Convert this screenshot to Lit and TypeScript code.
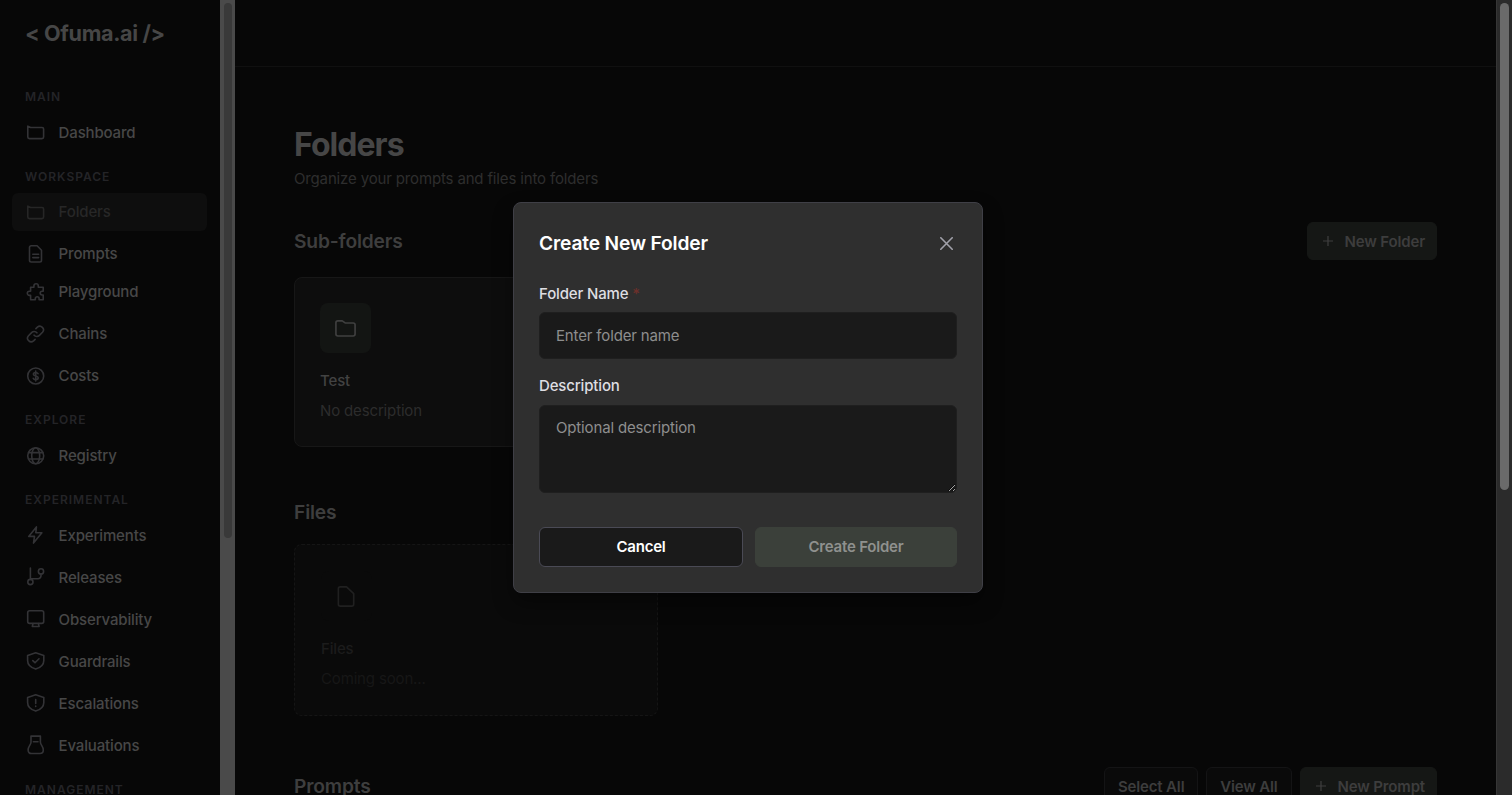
import { LitElement, html, css, svg } from "lit";
import { customElement } from "lit/decorators.js";

const icons: Record<string, unknown> = {
  folder: svg`<path d="M1.8 4.2V15a1.6 1.6 0 0 0 1.6 1.6H16A1.6 1.6 0 0 0 17.6 15V7.1A1.6 1.6 0 0 0 16 5.5H4.6Z"/>`,
  doc: svg`<path d="M5.2 1.8h5.9l4.4 4.4v10.1a1.7 1.7 0 0 1-1.7 1.7H5.2a1.7 1.7 0 0 1-1.7-1.7V3.5a1.7 1.7 0 0 1 1.7-1.7ZM6.8 10.2h5.8M6.8 13.6h5.8"/>`,
  puzzle: svg`<path d="M4.6 5.2h3.3V3.9a2.2 2.2 0 0 1 4.4 0v1.3h4.9v4h-1.1a1.9 1.9 0 0 0 0 3.8h1.1v4.8h-4.1v-1.2a1.9 1.9 0 0 0-3.8 0v1.2H4.6v-4.4H3.4a2.1 2.1 0 0 1 0-4.2h1.2Z"/>`,
  link: svg`<path d="M8.1 11.2a3.6 3.6 0 0 0 5.3.2l3.1-3.1a3.65 3.65 0 0 0-5.1-5.2L9.9 4.6M10.9 8.8a3.6 3.6 0 0 0-5.3-.2l-3.1 3.1a3.65 3.65 0 0 0 5.1 5.2l1.5-1.5"/>`,
  dollar: svg`<circle cx="9.7" cy="10" r="8"/><path d="M12 7.7c-.4-.8-1.3-1.2-2.3-1.2-1.3 0-2.3.6-2.3 1.7 0 2.4 4.8 1.1 4.8 3.6 0 1.1-1.1 1.8-2.5 1.8-1.2 0-2.2-.5-2.5-1.4M9.7 5.1v9.8"/>`,
  globe: svg`<circle cx="9.7" cy="9.8" r="8"/><ellipse cx="9.7" cy="9.8" rx="4" ry="8"/><path d="M2.6 6.6h14.2M2.6 13h14.2"/>`,
  bolt: svg`<path d="M10.4 1.9 2.7 11.4h5.8l-1 6.7 8.4-10.3H9.8Z"/>`,
  branch: svg`<circle cx="4.4" cy="15" r="2.6"/><circle cx="15" cy="4.4" r="2.6"/><path d="M4.4 1v11.4M15 7v1.7a3 3 0 0 1-3 3H4.6"/>`,
  monitor: svg`<rect x="1.7" y="1.8" width="16" height="12.6" rx="1.9"/><path d="M7 14.6l-.7 2.9h6.8l-.7-2.9"/>`,
  shieldCheck: svg`<path d="M9.7 1.8 17.8 4.5v5c0 4.2-3.2 7.1-8.1 8.6-4.9-1.5-8.1-4.4-8.1-8.6v-5ZM6.8 9.6l2.2 2.2 4-4"/>`,
  shieldAlert: svg`<path d="M9.7 1.8 17.8 4.5v5c0 4.2-3.2 7.1-8.1 8.6-4.9-1.5-8.1-4.4-8.1-8.6v-5ZM9.7 6.6v3.8M9.7 13.1v.3"/>`,
  flask: svg`<path d="M5 1.100h9.400v6.200c0 2.600 2.900 4 2.900 7.700 0 2.200-1.300 3.500-3.300 3.500H5.400c-2 0-3.300-1.300-3.300-3.500 0-3.700 2.900-5.100 2.900-7.700ZM7.400 6.700h4.600"/>`,
};

const icon = (name: string) => html`<svg class="icon" viewBox="0 0 20 20">${icons[name]}</svg>`;
const plus = html`<svg class="plus" viewBox="0 0 12 12"><path d="M6 1v10M1 6h10"/></svg>`;

interface NavItem { label: string; icon: string; active?: boolean; tight?: boolean }
const sections: { title: string; items: NavItem[] }[] = [
  { title: "Main", items: [{ label: "Dashboard", icon: "folder" }] },
  {
    title: "Workspace",
    items: [
      { label: "Folders", icon: "folder", active: true },
      { label: "Prompts", icon: "doc", tight: true },
      { label: "Playground", icon: "puzzle" },
      { label: "Chains", icon: "link" },
      { label: "Costs", icon: "dollar" },
    ],
  },
  { title: "Explore", items: [{ label: "Registry", icon: "globe" }] },
  {
    title: "Experimental",
    items: [
      { label: "Experiments", icon: "bolt" },
      { label: "Releases", icon: "branch" },
      { label: "Observability", icon: "monitor" },
      { label: "Guardrails", icon: "shieldCheck" },
      { label: "Escalations", icon: "shieldAlert" },
      { label: "Evaluations", icon: "flask" },
    ],
  },
  { title: "Management", items: [] },
];

@customElement("side-nav")
class SideNav extends LitElement {
  static styles = css`
    :host { display: block; width: 220px; height: 100%; overflow: hidden; background: #070707; }
    .brand { height: 67px; line-height: 67px; padding-left: 25px; font-size: 21.6px; font-weight: 700; letter-spacing: -0.36px; color: #464646; white-space: nowrap; }
    .nav { display: flex; flex-direction: column; gap: 15.7px; padding: 19.9px 13px 0 12px; }
    .title { height: 19px; margin-bottom: 7.5px; padding-left: 13px; line-height: 19px; font-size: 12px; font-weight: 600; letter-spacing: 1px; text-transform: uppercase; color: #242427; }
    .item { display: flex; align-items: center; gap: 12.6px; height: 37.6px; margin-bottom: 4.4px; padding-left: 14px; border-radius: 6px; font-size: 15px; font-weight: 500; letter-spacing: -0.15px; color: #474747; }
    .item.tight { margin-bottom: 0.4px; }
    .item:last-child { margin-bottom: 0; }
    .item.active { background: #0e0e0e; color: #272727; }
    .icon { width: 20px; height: 20px; fill: none; stroke: #333336; stroke-width: 1.6; stroke-linecap: round; stroke-linejoin: round; }
    .active .icon { stroke: #262626; }
  `;
  render() {
    return html`
      <div class="brand">&lt; Ofuma.ai /&gt;</div>
      <nav class="nav">
        ${sections.map((s) => html`
          <section>
            <div class="title">${s.title}</div>
            ${s.items.map((i) => html`
              <div class="item ${i.active ? "active" : ""} ${i.tight ? "tight" : ""}">${icon(i.icon)}<span>${i.label}</span></div>
            `)}
          </section>
        `)}
      </nav>
    `;
  }
}

@customElement("folders-page")
class FoldersPage extends LitElement {
  static styles = css`
    :host { display: block; height: 100%; overflow: hidden; background: #070707; letter-spacing: -0.15px; }
    .header { box-sizing: border-box; height: 67px; border-bottom: 1px solid #101010; }
    .content { padding: 58px 59px 0; }
    h1 { margin: 0; height: 40px; line-height: 40px; font-size: 32px; font-weight: 700; letter-spacing: -0.96px; color: #464646; }
    .sub { margin-top: 2px; height: 24px; line-height: 24px; font-size: 15px; color: #2e2e2e; }
    .row { display: flex; align-items: center; justify-content: space-between; height: 38px; }
    .first { margin-top: 31px; }
    .files { margin-top: 46px; }
    .prompts { margin-top: 51px; }
    h2 { margin: 0; font-size: 19.2px; font-weight: 600; color: #3e3e3e; }
    .btns { display: flex; gap: 8px; }
    .btn { box-sizing: border-box; display: flex; align-items: center; height: 38px; padding: 0 12.9px; border: 1px solid #141415; border-radius: 6px; background: #0a0a0a; font-size: 15px; font-weight: 600; color: #3d3d3d; white-space: nowrap; }
    .btn.primary { gap: 11px; padding-left: 14px; padding-right: 11px; border-color: #151715; background: #151715; }
    .plus { width: 12px; height: 12px; fill: none; stroke: #3f3f3f; stroke-width: 1.2; }
    .card { box-sizing: border-box; width: 364px; height: 170px; margin-top: 17px; padding: 25px; border: 1px solid #171717; border-radius: 8px; background: #0d0d0d; }
    .files + .card { height: 172px; margin-top: 13px; padding: 26px; border: 1px dashed #151515; background: #0a0a0a; }
    .thumb { display: flex; align-items: center; justify-content: center; width: 51px; height: 50px; border-radius: 8px; background: #131513; }
    .thumb svg { width: 23px; height: 23px; fill: none; stroke: #404040; stroke-width: 1.7; stroke-linejoin: round; }
    .files + .card .thumb { background: #0a0a0a; }
    .files + .card .thumb svg { stroke: #202020; }
    .name { margin-top: 16px; height: 24px; line-height: 24px; font-size: 15px; font-weight: 500; color: #424242; }
    .desc { margin-top: 6px; height: 24px; line-height: 24px; font-size: 15px; color: #2c2c2c; }
    .files + .card .name { color: #1c1c1c; font-weight: 500; }
    .files + .card .desc { color: #171717; }
  `;
  render() {
    return html`
      <div class="header"></div>
      <div class="content">
        <h1>Folders</h1>
        <div class="sub">Organize your prompts and files into folders</div>
        <div class="row first"><h2>Sub-folders</h2><div class="btn primary">${plus}<span>New Folder</span></div></div>
        <div class="card">
          <div class="thumb"><svg viewBox="0 0 24 24"><path d="M2 6a2 2 0 0 1 2-2h4.600l3 2.200h8.400a2 2 0 0 1 2 2v9.600a2 2 0 0 1-2 2h-16a2 2 0 0 1-2-2Z"/></svg></div>
          <div class="name">Test</div>
          <div class="desc">No description</div>
        </div>
        <div class="row files"><h2>Files</h2></div>
        <div class="card">
          <div class="thumb"><svg viewBox="0 0 24 24"><path d="M5.500 2h6.500l7.500 7v11a2 2 0 0 1-2 2H5.500a2 2 0 0 1-2-2V4a2 2 0 0 1 2-2Z"/></svg></div>
          <div class="name">Files</div>
          <div class="desc">Coming soon...</div>
        </div>
        <div class="row prompts">
          <h2>Prompts</h2>
          <div class="btns"><div class="btn">Select All</div><div class="btn">View All</div><div class="btn primary">${plus}<span>New Prompt</span></div></div>
        </div>
      </div>
    `;
  }
}

@customElement("create-dialog")
class CreateDialog extends LitElement {
  static styles = css`
    :host { box-sizing: border-box; display: block; width: 470px; height: 391px; padding: 25px; border: 1px solid #3f3f46; border-radius: 8px; background: #2f2f2f; box-shadow: 0 10px 20px rgba(0, 0, 0, 0.4); letter-spacing: -0.15px; }
    .head { display: flex; align-items: center; justify-content: space-between; height: 31px; padding-right: 4px; }
    .title { padding-bottom: 2px; font-size: 19.2px; font-weight: 600; color: #fff; }
    .close { width: 13px; height: 13px; fill: none; stroke: #a1a1aa; stroke-width: 1.6; stroke-linecap: round; }
    .label { height: 24px; line-height: 24px; font-size: 15px; font-weight: 500; color: #dedee2; }
    .name { margin-top: 23px; }
    .description { margin-top: 15px; }
    .star { color: #6b302b; }
    .field { box-sizing: border-box; display: block; width: 100%; margin: 6px 0 0; padding: 0 16px; border: 1px solid #1f1f1f; border-radius: 6px; background: #1a1a1a; font: 400 15px Inter, sans-serif; letter-spacing: -0.15px; color: #fff; outline: none; }
    .field::placeholder { color: #8e8e8e; opacity: 1; }
    input.field { height: 47px; }
    textarea.field { height: 88px; margin-top: 7px; padding-top: 10px; line-height: 23px; resize: vertical; }
    .actions { display: grid; grid-template-columns: 204px 202px; gap: 12px; margin-top: 34px; }
    .btn { box-sizing: border-box; height: 40px; line-height: 38px; border: 1px solid #4a4a55; border-radius: 6px; background: #1a1a1a; text-align: center; font-size: 15px; font-weight: 600; letter-spacing: -0.2px; color: #fff; }
    .btn.create { border-color: #3b403a; background: #3b403a; color: #8f918e; }
  `;
  render() {
    return html`
      <div class="head"><div class="title">Create New Folder</div><svg class="close" viewBox="0 0 13 13"><path d="M.8.8l11.400 11.400M12.200.8.8 12.200"/></svg></div>
      <div class="label name">Folder Name <span class="star">*</span></div>
      <input class="field" placeholder="Enter folder name" />
      <div class="label description">Description</div>
      <textarea class="field" placeholder="Optional description"></textarea>
      <div class="actions"><div class="btn">Cancel</div><div class="btn create">Create Folder</div></div>
    `;
  }
}

@customElement("app-root")
class AppRoot extends LitElement {
  static styles = css`
    :host { display: grid; grid-template-columns: 220px 15px 1261px 16px; width: 1512px; height: 795px; overflow: hidden; position: relative; background: #070707; font-family: Inter, sans-serif; }
    side-nav, folders-page { min-width: 0; min-height: 0; }
    .track { box-sizing: border-box; background: #4a4a4a; padding: 3px 3px 0 4px; }
    .thumb { height: 535px; border-radius: 4px; background: #393939; }
    .track.page { background: #2b2b2b; border-left: 1px solid #363636; padding: 3px 3px 0 3px; }
    .track.page .thumb { height: 487px; border-radius: 5px; background: #6a6a6a; }
    .dialog { position: absolute; left: 513px; top: 202px; }
  `;
  render() {
    return html`
      <side-nav></side-nav>
      <div class="track"><div class="thumb"></div></div>
      <folders-page></folders-page>
      <div class="track page"><div class="thumb"></div></div>
      <create-dialog class="dialog"></create-dialog>
    `;
  }
}
